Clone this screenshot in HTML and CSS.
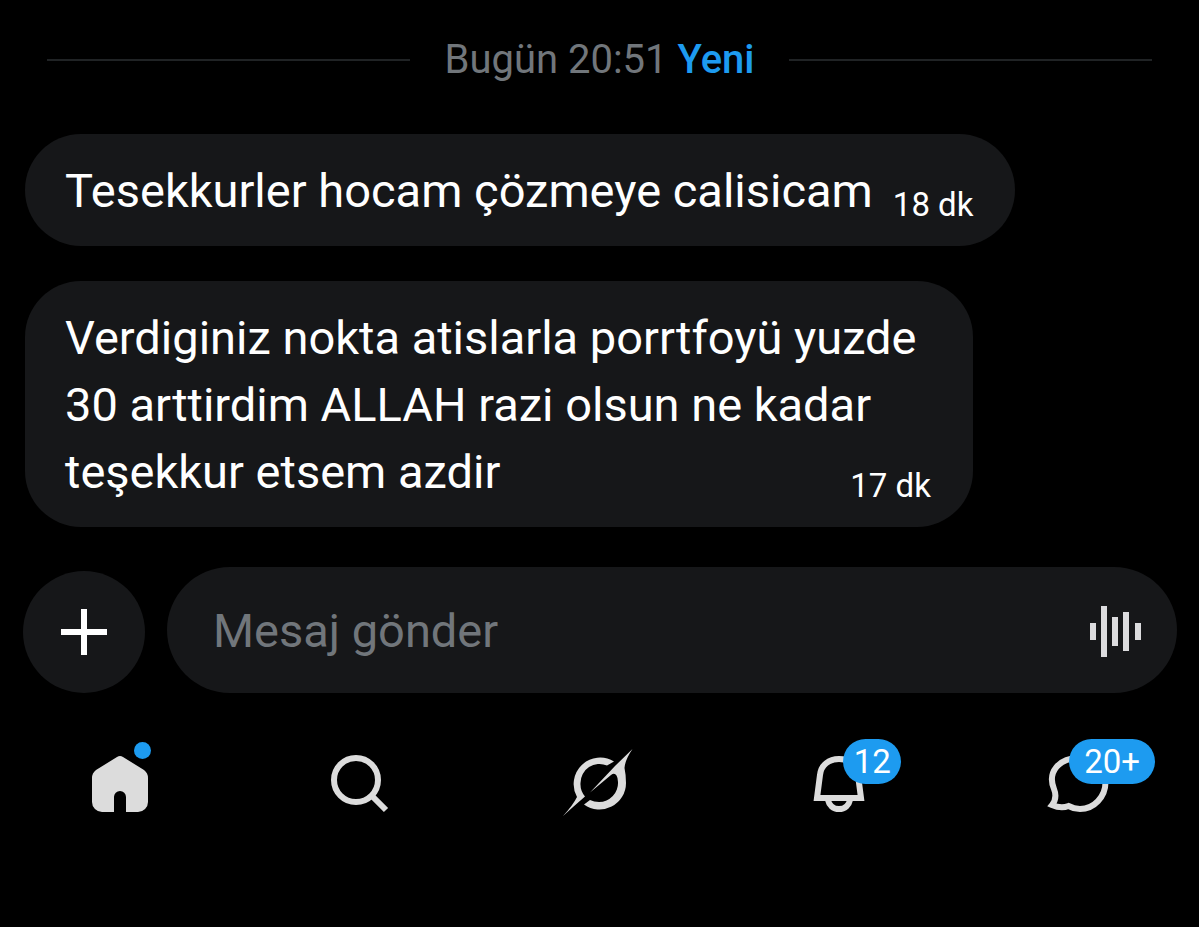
FILE: index.html
```html
<!DOCTYPE html>
<html lang="tr">
<head>
    <meta charset="UTF-8">
    <meta name="viewport" content="width=device-width, initial-scale=1.0">
    <title>Mesajlar</title>
    <link rel="stylesheet" href="styles.css">
</head>
<body>
    <main class="chat">
        <div class="divider">
            <p>Bugün 20:51 <span class="new">Yeni</span></p>
        </div>

        <div class="messages">
            <div class="message">
                <p>Tesekkurler hocam çözmeye calisicam</p>
                <time>18 dk</time>
            </div>
            <div class="message message-long">
                <p>Verdiginiz nokta atislarla porrtfoyü yuzde<br>30 arttirdim ALLAH razi olsun ne kadar<br>teşekkur etsem azdir</p>
                <time>17 dk</time>
            </div>
        </div>

        <form class="composer">
            <button type="button" class="add-button" aria-label="Ekle">
                <svg width="46" height="46" viewBox="0 0 46 46"><path d="M23 0V46M0 23H46" stroke="currentColor" stroke-width="6"/></svg>
            </button>
            <div class="field">
                <input type="text" placeholder="Mesaj gönder" aria-label="Mesaj gönder">
                <button type="button" class="voice-button" aria-label="Sesli mesaj">
                    <svg width="52" height="54" viewBox="0 0 52 54" fill="currentColor">
                        <rect x="0" y="20" width="6" height="17"/>
                        <rect x="11" y="3" width="6" height="51"/>
                        <rect x="22" y="14" width="6" height="29"/>
                        <rect x="33" y="9" width="6" height="39"/>
                        <rect x="45" y="20" width="6" height="17"/>
                    </svg>
                </button>
            </div>
        </form>
    </main>

    <nav class="tabs">
        <a href="#home" aria-label="Ana sayfa">
            <svg viewBox="0 0 100 100" fill="currentColor">
                <path d="M47 27Q50 25 53 27L74 40Q78 43 78 48V72A10 10 0 0 1 68 82H56V67A6 6 0 0 0 44 67V82H32A10 10 0 0 1 22 72V48Q22 43 26 40Z"/>
            </svg>
            <span class="dot"></span>
        </a>
        <a href="#search" aria-label="Ara">
            <svg viewBox="0 0 100 100" fill="none" stroke="currentColor" stroke-width="6">
                <circle cx="46" cy="50" r="22"/>
                <path d="M61.5 65.5L76 80"/>
            </svg>
        </a>
        <a href="#grok" aria-label="Grok">
            <svg viewBox="0 0 100 100" fill="currentColor">
                <path d="M65 31.5A26.5 26.5 0 0 0 28 67Q24 75 14 86Q25 76 36 66.5A19 19 0 0 1 31.500 53A19 19 0 0 1 58 35.500Z"/>
                <path d="M83.500 19Q76 30 75.500 38Q77 45 77 53A26.500 26.500 0 0 1 35 74.500L41 70Q45 72 50 72A19 19 0 0 0 69 52Q69 48 67.500 45.500Q65.500 42.500 62 45L41 62.500L66 36Z"/>
            </svg>
        </a>
        <a href="#notifications" aria-label="Bildirimler">
            <svg viewBox="0 0 100 100" fill="none" stroke="currentColor" stroke-width="6">
                <path d="M28 68L31 45C32 35 40 29 50 29S68 35 69 45L72 68Z"/>
                <path d="M39 70C40 75 44 79 50 79S60 75 61 70"/>
            </svg>
            <span class="badge">12</span>
        </a>
        <a href="#messages" aria-label="Mesajlar">
            <svg viewBox="0 0 100 100" fill="none" stroke="currentColor" stroke-width="6">
                <path d="M23 75C27 70 27 64 25 59C18 42 30 28 50 28C66 28 76.500 38 76.500 52C76.500 67 65 79 51 79Q45 79 39.500 76Q32 79 23 75Z"/>
            </svg>
            <span class="badge badge-messages">20+</span>
        </a>
    </nav>
</body>
</html>
```

FILE: styles.css
```css
* {
    margin: 0;
    padding: 0;
    box-sizing: border-box;
}

body {
    background-color: #000000;
    color: #ffffff;
    font-family: Roboto, "Noto Sans", sans-serif;
    font-size: 47px;
    min-height: 100vh;
}

button {
    border: none;
    background: none;
    cursor: pointer;
}

svg {
    display: block;
}

.divider {
    display: flex;
    align-items: center;
    gap: 34px;
    padding: 36px 47px 0;
    color: #71767b;
    font-size: 40px;
    line-height: 48px;
}

.divider::before,
.divider::after {
    content: "";
    flex: 1;
    height: 2px;
    background-color: #202325;
}

.new {
    color: #1d9bf0;
    font-weight: 500;
}

.messages {
    display: flex;
    flex-direction: column;
    align-items: flex-start;
    gap: 35px;
    padding: 50px 25px 40px;
}

.message {
    display: flex;
    align-items: flex-end;
    gap: 20px;
    padding: 23px 42px 22px 40px;
    border-radius: 56px;
    background-color: #161719;
    line-height: 67px;
}

.message time {
    font-size: 33px;
    line-height: 60px;
    margin-bottom: -11px;
}

/* long messages keep the time in the corner of the bubble */
.message-long {
    display: grid;
    width: 82.5%;
}

.message-long p,
.message-long time {
    grid-area: 1 / 1;
}

.message-long time {
    align-self: end;
    justify-self: end;
}

.composer {
    display: flex;
    align-items: flex-end;
    gap: 22px;
    padding: 0 22px 0 23px;
}

.add-button {
    display: flex;
    align-items: center;
    justify-content: center;
    width: 122px;
    height: 122px;
    border-radius: 50%;
    background-color: #161719;
    color: #ffffff;
}

.field {
    flex: 1;
    display: flex;
    align-items: center;
    height: 126px;
    padding: 0 35px 0 46px;
    border-radius: 63px;
    background-color: #161719;
}

.field input {
    flex: 1;
    min-width: 0;
    border: none;
    outline: none;
    background: none;
    color: #ffffff;
    font: inherit;
}

.field input::placeholder {
    color: #71767b;
}

.voice-button {
    color: #dcdcde;
}

.tabs {
    display: grid;
    grid-template-columns: repeat(5, 1fr);
    justify-items: center;
    padding: 37px 0;
}

.tabs a {
    position: relative;
    width: 100px;
    height: 100px;
    color: #dcdcdc;
    text-decoration: none;
}

.dot {
    position: absolute;
    top: 12px;
    left: 64px;
    width: 17px;
    height: 17px;
    border-radius: 50%;
    background-color: #1d9bf0;
}

.badge {
    position: absolute;
    top: 9px;
    left: 54px;
    width: 58px;
    height: 45px;
    border-radius: 23px;
    background-color: #1d9bf0;
    color: #ffffff;
    font-size: 33px;
    line-height: 45px;
    text-align: center;
}

.badge-messages {
    left: 40px;
    width: 86px;
}
```
